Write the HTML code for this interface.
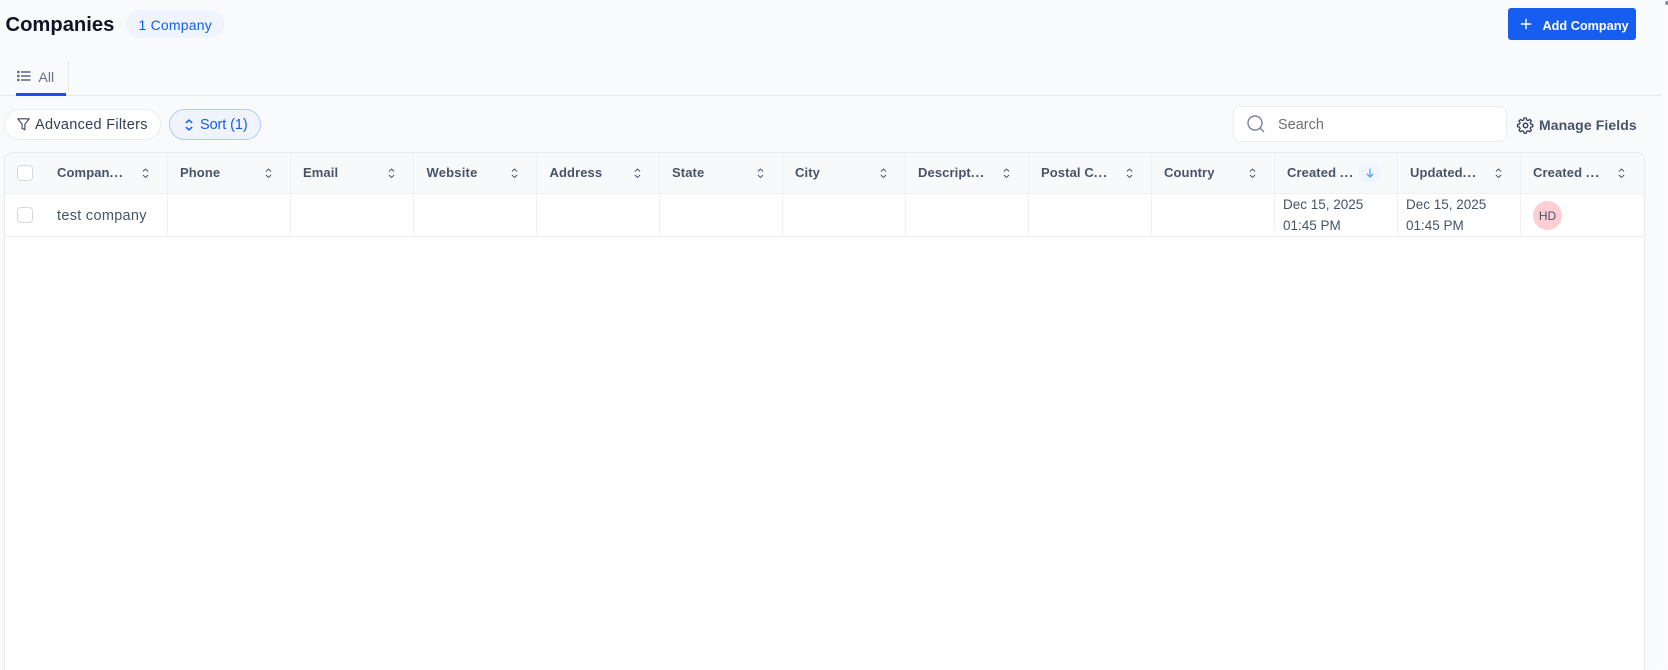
<!DOCTYPE html>
<html><head><meta charset="utf-8"><title>Companies</title>
<style>
html,body{margin:0;padding:0;width:1668px;height:669px;overflow:hidden;background:#f9fafc;font-family:"Liberation Sans",sans-serif}
.a{position:absolute}
.t{position:absolute;white-space:nowrap;line-height:20px;height:20px}
.h{font-weight:700;font-size:13px;color:#475467;top:163px;letter-spacing:.1px}
.h i{font-style:normal;letter-spacing:1.1px}
.d{font-size:13.5px;color:#475467;letter-spacing:0}
.l{position:absolute;top:153px;width:1px;height:84px;background:#eef0f3}
.s{position:absolute;top:168px;width:7px;height:10.5px}
svg{position:absolute;overflow:visible}
.cb{position:absolute;left:17px;width:14px;height:14px;border:1px solid #d5d9e0;border-radius:4px;background:#fff}
</style></head><body>
<div class="a" style="left:1661px;top:0;width:7px;height:669px;background:#fbfbfd"></div>
<div class="a" style="left:1665px;top:1px;width:3px;height:4px;background:#8a8f98;border-radius:2px 0 0 2px"></div>

<div class="t" style="left:5.5px;top:15px;font-size:20.2px;font-weight:700;color:#0f1524">Companies</div>
<div class="a" style="left:126px;top:10px;width:98px;height:28px;border-radius:14px;background:#eff4ff"></div>
<div class="t" style="left:138.5px;top:15px;font-size:14px;color:#155eef;letter-spacing:.2px">1 Company</div>

<div class="a" style="left:1508px;top:8px;width:128px;height:32px;border-radius:3px;background:#155eef"></div>
<svg style="left:1520px;top:18px" width="12" height="12" viewBox="0 0 12 12"><path d="M6 .8V11.2M.8 6H11.2" stroke="#fff" stroke-width="1.4" fill="none"/></svg>
<div class="t" style="left:1542.5px;top:15.5px;font-size:12.7px;font-weight:700;color:#fff">Add Company</div>

<svg style="left:17px;top:70px" width="14" height="12" viewBox="0 0 14 12"><g fill="#667085"><rect x="0" y=".8" width="2.6" height="2.4" rx=".7"/><rect x="0" y="4.8" width="2.6" height="2.4" rx=".7"/><rect x="0" y="8.8" width="2.6" height="2.4" rx=".7"/><rect x="4" y="1.2" width="9.5" height="1.6"/><rect x="4" y="5.2" width="9.5" height="1.6"/><rect x="4" y="9.2" width="9.5" height="1.6"/></g></svg>
<div class="t" style="left:38.5px;top:67px;font-size:14px;color:#667085">All</div>
<div class="a" style="left:68px;top:61px;width:1px;height:30px;background:#e4e7ec"></div>
<div class="a" style="left:0;top:95px;width:1661px;height:1px;background:#e4e7ec"></div>
<div class="a" style="left:16px;top:93px;width:50px;height:3px;background:#0f55e8"></div>

<div class="a" style="left:4px;top:109px;width:155px;height:29px;border:1px solid #eaecf0;border-radius:16px;background:#fff"></div>
<svg style="left:17px;top:118px" width="13" height="13" viewBox="0 0 13 13"><path d="M.8 .8H12.2L7.9 6.2V11.8L5.1 10.4V6.2Z" stroke="#344054" stroke-width="1.1" fill="none" stroke-linejoin="round"/></svg>
<div class="t" style="left:35px;top:115px;font-size:14.5px;color:#344054;letter-spacing:.3px">Advanced Filters</div>

<div class="a" style="left:169px;top:109px;width:90px;height:29px;border:1px solid #b2ccff;border-radius:16px;background:#eff4ff"></div>
<svg style="left:184.5px;top:118.5px" width="8" height="12" viewBox="0 0 9 13"><path d="M1 4.2L4.5 1L8 4.2M1 8.8L4.5 12L8 8.8" stroke="#155eef" stroke-width="1.7" fill="none"/></svg>
<div class="t" style="left:200px;top:115px;font-size:14.5px;color:#155eef;letter-spacing:-.1px">Sort (1)</div>

<div class="a" style="left:1233px;top:106px;width:272px;height:34px;border:1px solid #eaecf0;border-radius:7px;background:#fff"></div>
<svg style="left:1247px;top:115px" width="18" height="18" viewBox="0 0 18 18"><circle cx="8" cy="8" r="7" stroke="#7b8494" stroke-width="1.4" fill="none"/><path d="M13 13L17 17" stroke="#7b8494" stroke-width="1.4"/></svg>
<div class="t" style="left:1278px;top:115px;font-size:14.5px;color:#6f6f70;letter-spacing:0">Search</div>

<svg style="left:1516.5px;top:116.5px" width="17" height="17" viewBox="0 0 24 24"><path d="M12 15.2a3.2 3.2 0 1 0 0-6.4 3.2 3.2 0 0 0 0 6.4Z" stroke="#344054" stroke-width="2" fill="none"/><path d="M10.3 1.5h3.4l.6 3 2.2.9 2.6-1.7 2.4 2.4-1.7 2.6.9 2.2 3 .6v3.4l-3 .6-.9 2.2 1.7 2.6-2.4 2.4-2.6-1.7-2.2.9-.6 3h-3.4l-.6-3-2.2-.9-2.6 1.7-2.4-2.4 1.7-2.6-.9-2.2-3-.6v-3.4l3-.6.9-2.2-1.7-2.6 2.4-2.4 2.6 1.7 2.2-.9Z" stroke="#344054" stroke-width="2" fill="none" stroke-linejoin="round" transform="translate(12 12) scale(.92) translate(-12.5 -13)"/></svg>
<div class="t" style="left:1539px;top:115px;font-size:14px;font-weight:700;color:#475467;letter-spacing:.1px">Manage Fields</div>

<!-- table -->
<div class="a" style="left:4px;top:152px;width:1639px;height:517px;border:1px solid #e8eaee;border-bottom:0;border-radius:8px 8px 0 0;background:#fff"></div>
<div class="a" style="left:5px;top:153px;width:1639px;height:40px;border-radius:7px 7px 0 0;background:#f8f9fb"></div>
<div class="a" style="left:5px;top:193px;width:1639px;height:1px;background:#eef0f3"></div>
<div class="a" style="left:5px;top:236px;width:1639px;height:1px;background:#eceef1"></div>

<div class="l" style="left:167px"></div><div class="l" style="left:290px"></div><div class="l" style="left:413px"></div>
<div class="l" style="left:536px"></div><div class="l" style="left:659px"></div><div class="l" style="left:782px"></div>
<div class="l" style="left:905px"></div><div class="l" style="left:1028px"></div><div class="l" style="left:1151px"></div>
<div class="l" style="left:1274px"></div><div class="l" style="left:1397px"></div><div class="l" style="left:1520px"></div>

<div class="cb" style="top:165px"></div>
<div class="cb" style="top:207px"></div>

<div class="t h" style="left:57px">Compan<i>...</i></div>
<div class="t h" style="left:180px">Phone</div>
<div class="t h" style="left:303px">Email</div>
<div class="t h" style="left:426.5px;letter-spacing:.2px">Website</div>
<div class="t h" style="left:549.5px">Address</div>
<div class="t h" style="left:672px">State</div>
<div class="t h" style="left:795px">City</div>
<div class="t h" style="left:918px">Descript<i>...</i></div>
<div class="t h" style="left:1041px">Postal C<i>...</i></div>
<div class="t h" style="left:1164px">Country</div>
<div class="t h" style="left:1287px">Created <i>...</i></div>
<div class="t h" style="left:1410px">Updated<i>...</i></div>
<div class="t h" style="left:1533px">Created <i>...</i></div>

<svg class="s" style="left:141.5px" viewBox="0 0 8 12"><path d="M1 4L4 1.2L7 4M1 8L4 10.8L7 8" stroke="#475467" stroke-width="1.1" fill="none"/></svg>
<svg class="s" style="left:264.5px" viewBox="0 0 8 12"><path d="M1 4L4 1.2L7 4M1 8L4 10.8L7 8" stroke="#475467" stroke-width="1.1" fill="none"/></svg>
<svg class="s" style="left:387.5px" viewBox="0 0 8 12"><path d="M1 4L4 1.2L7 4M1 8L4 10.8L7 8" stroke="#475467" stroke-width="1.1" fill="none"/></svg>
<svg class="s" style="left:510.5px" viewBox="0 0 8 12"><path d="M1 4L4 1.2L7 4M1 8L4 10.8L7 8" stroke="#475467" stroke-width="1.1" fill="none"/></svg>
<svg class="s" style="left:633.5px" viewBox="0 0 8 12"><path d="M1 4L4 1.2L7 4M1 8L4 10.8L7 8" stroke="#475467" stroke-width="1.1" fill="none"/></svg>
<svg class="s" style="left:756.5px" viewBox="0 0 8 12"><path d="M1 4L4 1.2L7 4M1 8L4 10.8L7 8" stroke="#475467" stroke-width="1.1" fill="none"/></svg>
<svg class="s" style="left:879.5px" viewBox="0 0 8 12"><path d="M1 4L4 1.2L7 4M1 8L4 10.8L7 8" stroke="#475467" stroke-width="1.1" fill="none"/></svg>
<svg class="s" style="left:1002.5px" viewBox="0 0 8 12"><path d="M1 4L4 1.2L7 4M1 8L4 10.8L7 8" stroke="#475467" stroke-width="1.1" fill="none"/></svg>
<svg class="s" style="left:1125.5px" viewBox="0 0 8 12"><path d="M1 4L4 1.2L7 4M1 8L4 10.8L7 8" stroke="#475467" stroke-width="1.1" fill="none"/></svg>
<svg class="s" style="left:1248.5px" viewBox="0 0 8 12"><path d="M1 4L4 1.2L7 4M1 8L4 10.8L7 8" stroke="#475467" stroke-width="1.1" fill="none"/></svg>
<svg class="s" style="left:1494.5px" viewBox="0 0 8 12"><path d="M1 4L4 1.2L7 4M1 8L4 10.8L7 8" stroke="#475467" stroke-width="1.1" fill="none"/></svg>
<svg class="s" style="left:1617.5px" viewBox="0 0 8 12"><path d="M1 4L4 1.2L7 4M1 8L4 10.8L7 8" stroke="#475467" stroke-width="1.1" fill="none"/></svg>

<div class="a" style="left:1359px;top:162px;width:22px;height:22px;border-radius:50%;background:#eff6ff"></div>
<svg style="left:1366px;top:168px" width="8" height="10" viewBox="0 0 8 10"><path d="M4 .5V9M.8 5.8L4 9L7.2 5.8" stroke="#4f9cf9" stroke-width="1.2" fill="none"/></svg>

<div class="t" style="left:57px;top:206px;font-size:14.5px;color:#475467;letter-spacing:.3px">test company</div>
<div class="t d" style="left:1283px;top:194.5px">Dec 15, 2025</div>
<div class="t d" style="left:1283px;top:215.5px">01:45 PM</div>
<div class="t d" style="left:1406px;top:194.5px">Dec 15, 2025</div>
<div class="t d" style="left:1406px;top:215.5px">01:45 PM</div>
<div class="a" style="left:1533px;top:201px;width:29px;height:29px;border-radius:50%;background:#fecdd6"></div>
<div class="a" style="left:1533px;top:206px;width:29px;height:20px;line-height:20px;text-align:center;font-size:12px;color:#475467">HD</div>
</body></html>
